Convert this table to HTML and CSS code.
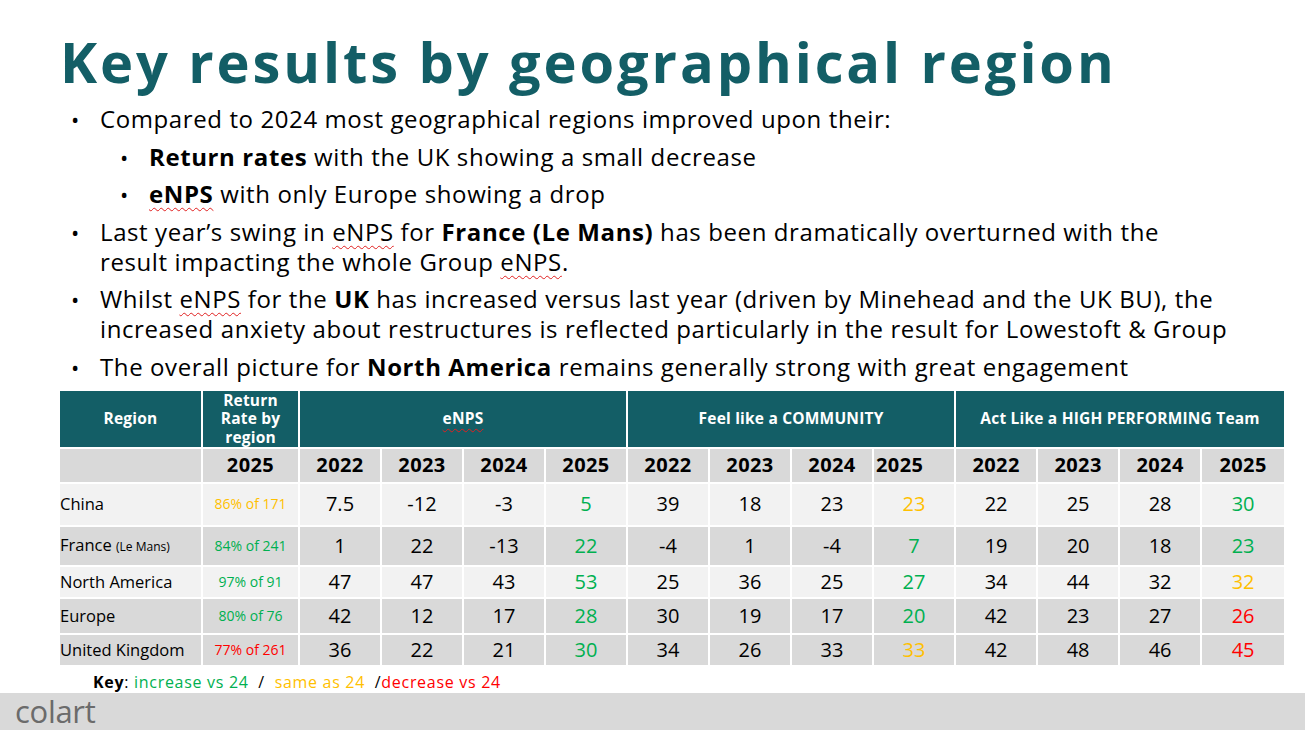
FILE: index.html
```html
<!DOCTYPE html>
<html lang="en">
<head>
<meta charset="utf-8">
<title>Key results by geographical region</title>
<link rel="stylesheet" href="styles.css">
</head>
<body>
<div class="slide">
  <h1 class="title">Key results by geographical region</h1>
  <ul class="bullets">
    <li>Compared to 2024 most geographical regions improved upon their:
      <ul class="sub">
        <li><b>Return rates</b> with the UK showing a small decrease</li>
        <li><b class="sp">eNPS</b> with only Europe showing a drop</li>
      </ul>
    </li>
    <li>Last year’s swing in <span class="sp">eNPS</span> for <b>France (Le Mans)</b> has been dramatically overturned with the<br>result impacting the whole Group <span class="sp">eNPS</span>.</li>
    <li>Whilst <span class="sp">eNPS</span> for the <b>UK</b> has increased versus last year (driven by Minehead and the UK BU), the increased anxiety about restructures is reflected particularly in the result for Lowestoft &amp; Group</li>
    <li>The overall picture for <b>North America</b> remains generally strong with great engagement</li>
  </ul>

  <table class="results">
    <colgroup>
      <col class="c-region"><col class="c-rate">
      <col class="c-yr"><col class="c-yr"><col class="c-yr"><col class="c-yr">
      <col class="c-yr"><col class="c-yr"><col class="c-yr"><col class="c-yr">
      <col class="c-yr"><col class="c-yr"><col class="c-yr"><col class="c-yr">
    </colgroup>
    <thead>
      <tr class="head">
        <th>Region</th>
        <th class="rate-h">Return Rate by region</th>
        <th colspan="4"><span class="sp-h">eNPS</span></th>
        <th colspan="4">Feel like a COMMUNITY</th>
        <th colspan="4" class="last">Act Like a HIGH PERFORMING Team</th>
      </tr>
      <tr class="years">
        <th></th><th>2025</th>
        <th>2022</th><th>2023</th><th>2024</th><th>2025</th>
        <th>2022</th><th>2023</th><th>2024</th><th class="shift">2025</th>
        <th>2022</th><th>2023</th><th>2024</th><th class="last">2025</th>
      </tr>
    </thead>
    <tbody>
      <tr class="r-light r1">
        <td class="region">China</td><td class="rate amber">86% of 171</td>
        <td>7.5</td><td>-12</td><td>-3</td><td class="green">5</td>
        <td>39</td><td>18</td><td>23</td><td class="amber">23</td>
        <td>22</td><td>25</td><td>28</td><td class="green last">30</td>
      </tr>
      <tr class="r-dark r2">
        <td class="region">France <small>(Le Mans)</small></td><td class="rate green">84% of 241</td>
        <td>1</td><td>22</td><td>-13</td><td class="green">22</td>
        <td>-4</td><td>1</td><td>-4</td><td class="green">7</td>
        <td>19</td><td>20</td><td>18</td><td class="green last">23</td>
      </tr>
      <tr class="r-light r3">
        <td class="region">North America</td><td class="rate green">97% of 91</td>
        <td>47</td><td>47</td><td>43</td><td class="green">53</td>
        <td>25</td><td>36</td><td>25</td><td class="green">27</td>
        <td>34</td><td>44</td><td>32</td><td class="amber last">32</td>
      </tr>
      <tr class="r-dark r4">
        <td class="region">Europe</td><td class="rate green">80% of 76</td>
        <td>42</td><td>12</td><td>17</td><td class="green">28</td>
        <td>30</td><td>19</td><td>17</td><td class="green">20</td>
        <td>42</td><td>23</td><td>27</td><td class="red last">26</td>
      </tr>
      <tr class="r-dark r5">
        <td class="region">United Kingdom</td><td class="rate red">77% of 261</td>
        <td>36</td><td>22</td><td>21</td><td class="green">30</td>
        <td>34</td><td>26</td><td>33</td><td class="amber">33</td>
        <td>42</td><td>48</td><td>46</td><td class="red last">45</td>
      </tr>
    </tbody>
  </table>

  <p class="key"><b>Key</b>: <span class="green">increase vs 24</span> &nbsp;/&nbsp; <span class="amber">same as 24</span> &nbsp;/<span class="red">decrease vs 24</span></p>

  <footer class="footer"><span class="brand">colart</span></footer>
</div>
</body>
</html>
```

FILE: styles.css
```css
* { box-sizing: border-box; }
html, body { margin: 0; padding: 0; background: #fff; }
body { font-family: "Open Sans", "Liberation Sans", sans-serif; color: #000; }

.slide {
  width: 1305px;
  height: 730px;
  overflow: hidden;
  display: flex;
  flex-direction: column;
}

.title {
  margin: 29px 0 0 60px;
  font-size: 56px;
  line-height: 64px;
  font-weight: 700;
  color: #135e66;
  letter-spacing: 2.9px;
}

.bullets {
  list-style: none;
  margin: 11px 0 0 0;
  padding: 0 0 0 100px;
  width: 1238px;
  font-size: 24px;
  line-height: 30px;
  letter-spacing: 0.6px;
}
.bullets li { position: relative; margin-top: 7.5px; }
.bullets > li:first-child { margin-top: 0; }
.bullets li::before {
  content: "•";
  position: absolute;
  left: -29px;
  top: 0;
  font-size: 22px;
}
.sub { list-style: none; margin: 0; padding: 0 0 0 49px; }
.sub li { margin-top: 7.5px; }

.sp, .sp-h {
  text-decoration: underline wavy #e02020;
  text-decoration-thickness: 1px;
  text-underline-offset: 4px;
}

.results {
  margin: 9px 0 0 60px;
  border-collapse: separate;
  border-spacing: 0;
  table-layout: fixed;
  width: 1224px;
  flex-shrink: 0;
}
.c-region { width: 143px; }
.c-rate { width: 97px; }
.c-yr { width: 82px; }

.results th, .results td {
  padding: 0;
  border-right: 2px solid #fff;
  border-bottom: 2px solid #fff;
  text-align: center;
  vertical-align: middle;
}
.results .last { border-right: 0; }
.results tbody tr:last-child td { border-bottom: 0; }

.head th {
  background: #135e66;
  color: #fff;
  font-size: 15.5px;
  font-weight: 700;
  height: 58px;
  line-height: 18.5px;
  letter-spacing: 0.2px;
}
.head .rate-h { padding: 0 12px; }

.years th {
  background: #d9d9d9;
  font-size: 20px;
  line-height: 24px;
  font-weight: 700;
  height: 35px;
  letter-spacing: 0.4px;
}
.years .shift { text-align: left; padding-left: 2px; }

.results td { font-size: 20px; line-height: 24px; }
.r-light td { background: #f2f2f2; }
.r-dark td { background: #d9d9d9; }
.r1 td { height: 43px; }
.r2 td { height: 40px; }
.r3 td { height: 32px; }
.r4 td { height: 36px; }
.r5 td { height: 30px; }

.results .region { text-align: left; font-size: 16.5px; }
.results .region small { font-size: 12px; }
.results .rate { font-size: 14px; }

.green { color: #00b050; }
.amber { color: #ffc000; }
.red { color: #ff0000; }

.key {
  margin: 8px 0 0 93px;
  font-size: 16px;
  line-height: 18px;
  letter-spacing: 0.7px;
}

.footer {
  margin-top: auto;
  height: 37px;
  flex-shrink: 0;
  background: #d9d9d9;
  display: flex;
  align-items: center;
  padding-left: 15px;
}
.brand {
  font-size: 31px;
  line-height: 31px;
  color: #6b6b6b;
  letter-spacing: -0.3px;
}
```
